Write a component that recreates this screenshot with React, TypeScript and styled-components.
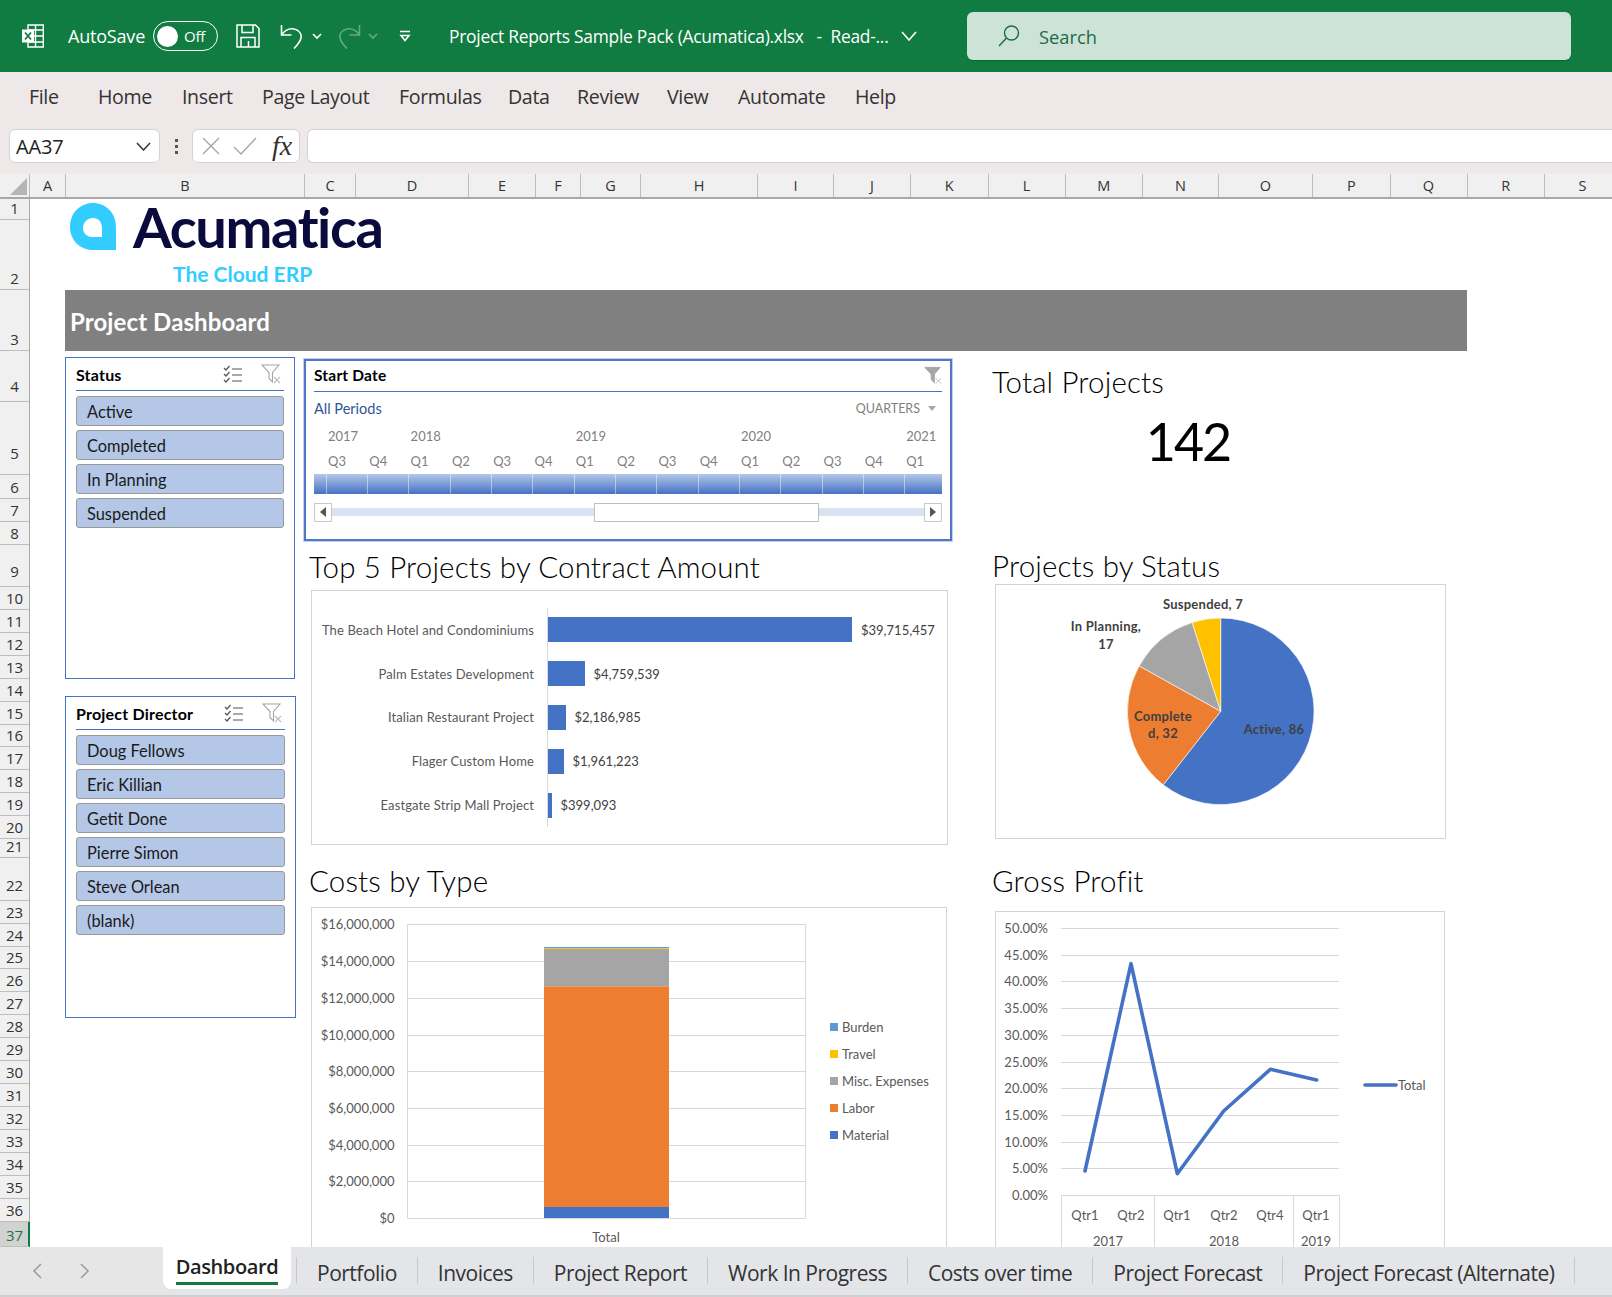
import React from "react";
import styled, { createGlobalStyle } from "styled-components";

const GlobalStyle = createGlobalStyle`
  html, body {
    margin: 0;
    padding: 0;
    background: #fff;
    font-family: "Open Sans", "Liberation Sans", sans-serif;
  }
  * { box-sizing: border-box; }
`;

const CALIBRI = `"Lato", "Liberation Sans", sans-serif`;

const Page = styled.div`
  width: 1612px;
  height: 1297px;
  overflow: hidden;
  display: flex;
  flex-direction: column;
  background: #fff;
`;

/* title bar */
const TitleBar = styled.div`
  height: 72px;
  flex: none;
  background: #107c41;
  color: #fff;
  display: flex;
  align-items: center;
  padding-left: 21px;
`;

const AutoSave = styled.span`
  margin-left: 23px;
  width: 85px;
  font-size: 18px;
  letter-spacing: -0.2px;
`;

const Toggle = styled.div`
  width: 65px;
  height: 30px;
  border: 1.5px solid #fff;
  border-radius: 15px;
  display: flex;
  align-items: center;
  padding-left: 3px;
  font-size: 15px;
  letter-spacing: -0.2px;
  gap: 6px;
`;

const Knob = styled.span`
  width: 21px;
  height: 21px;
  border-radius: 50%;
  background: #fff;
`;

const QuickIcon = styled.svg<{ $ml: number; $dim?: boolean }>`
  margin-left: ${(p) => p.$ml}px;
  flex: none;
  opacity: ${(p) => (p.$dim ? 0.35 : 1)};
`;

const DocTitle = styled.span`
  margin-left: 38px;
  width: 452px;
  font-size: 17.4px;
  letter-spacing: -0.25px;
  white-space: pre;
`;

const SearchBox = styled.div`
  width: 604px;
  height: 48px;
  margin-left: 50px;
  background: #cee3d8;
  border-radius: 6px;
  box-shadow: 0 1px 1px rgba(0, 0, 0, 0.2);
  display: flex;
  align-items: center;
  padding-left: 31px;
  gap: 19px;
  color: #1d6b43;
  font-size: 18.3px;
`;

/* ribbon */
const Ribbon = styled.div`
  flex: none;
  height: 102px;
  background: #efe8e8;
  display: flex;
  flex-direction: column;
`;

const MenuRow = styled.nav`
  height: 48px;
  margin-bottom: 9px;
  flex: none;
  display: flex;
  align-items: center;
  padding-left: 29px;
`;

const MenuItem = styled.span<{ $w: number }>`
  flex: none;
  width: ${(p) => p.$w}px;
  font-size: 19.6px;
  letter-spacing: -0.35px;
  color: #333;
`;

const FormulaRow = styled.div`
  height: 34px;
  flex: none;
  display: flex;
  align-items: stretch;
  padding-left: 9px;
`;

const FieldBox = styled.div`
  background: #fff;
  border: 1px solid #d4d2d2;
  border-radius: 6px;
  display: flex;
  align-items: center;
`;

const NameBox = styled(FieldBox)`
  width: 151px;
  padding: 1px 8px 0 6px;
  justify-content: space-between;
  font-size: 20px;
  letter-spacing: -0.2px;
  color: #222;
`;

const DotsHandle = styled.div`
  width: 32px;
  display: flex;
  flex-direction: column;
  align-items: center;
  justify-content: center;
  gap: 3px;
  span {
    width: 3px;
    height: 3px;
    background: #555;
  }
`;

const ButtonsBox = styled(FieldBox)`
  width: 108px;
  padding-left: 8px;
  gap: 12px;
`;

const FxMark = styled.span`
  margin-left: 3px;
  font-family: "Liberation Serif", serif;
  font-style: italic;
  font-size: 28px;
  line-height: 30px;
  color: #333;
`;

const FormulaInput = styled(FieldBox)`
  flex: 1;
  margin-left: 7px;
  border-right: none;
  border-radius: 6px 0 0 6px;
`;

/* column headers */
const ColumnHeaders = styled.div`
  height: 25px;
  flex: none;
  display: flex;
  background: #f0f0f0;
  border-bottom: 2px solid #a8a8a8;
`;

const Corner = styled.div`
  width: 30px;
  flex: none;
  border-right: 1px solid #bdbdbd;
  position: relative;
  &::after {
    content: "";
    position: absolute;
    right: 2px;
    bottom: 2px;
    border-style: solid;
    border-width: 0 0 17px 17px;
    border-color: transparent transparent #b5b5b5 transparent;
  }
`;

const ColHead = styled.div<{ $w: number }>`
  width: ${(p) => p.$w}px;
  flex: none;
  border-right: 1px solid #bdbdbd;
  text-align: center;
  font-size: 14.5px;
  line-height: 23px;
  color: #333;
`;

/* sheet */
const SheetArea = styled.div`
  height: 1048px;
  flex: none;
  display: flex;
`;

const RowHeaders = styled.div`
  width: 30px;
  flex: none;
  background: #f0f0f0;
  border-right: 1px solid #a8a8a8;
`;

const RowHead = styled.div<{ $h: number; $lift: number; $on?: boolean }>`
  height: ${(p) => p.$h}px;
  padding-bottom: ${(p) => p.$lift}px;
  border-bottom: 1px solid #bdbdbd;
  display: flex;
  align-items: flex-end;
  justify-content: center;
  font-size: 15px;
  line-height: 21px;
  color: ${(p) => (p.$on ? "#107c41" : "#333")};
  background: ${(p) => (p.$on ? "#d2d2d2" : "transparent")};
  ${(p) => (p.$on ? "box-shadow: 1px 0 0 #107c41, inset -1px 0 0 #107c41;" : "")}
`;

const Canvas = styled.div`
  flex: 1;
  min-width: 0;
  padding-left: 35px;
`;

const LogoBlock = styled.div`
  height: 91px;
  display: flex;
  flex-direction: column;
  padding: 2px 0 0 5px;
`;

const LogoRow = styled.div`
  display: flex;
  align-items: center;
  gap: 17px;
  height: 50px;
`;

const LogoWord = styled.span`
  display: block;
  margin: -8px 0 -10px;
  font-family: ${CALIBRI};
  font-weight: 700;
  font-size: 56px;
  line-height: 68px;
  letter-spacing: -1.4px;
  color: #0a0a3c;
`;

const LogoTag = styled.span`
  margin: 11px 0 0 103px;
  font-family: ${CALIBRI};
  font-weight: 700;
  font-size: 21px;
  line-height: 24px;
  color: #33ccff;
`;

const Banner = styled.div`
  width: 1402px;
  height: 61px;
  background: #808080;
  color: #fff;
  font-family: ${CALIBRI};
  font-weight: 700;
  font-size: 24px;
  letter-spacing: 0.1px;
  line-height: 32px;
  padding: 16px 0 0 5px;
`;

const Columns = styled.div`
  display: flex;
  align-items: flex-start;
`;

const LeftColumn = styled.div`
  width: 231px;
  flex: none;
  padding-top: 6px;
  display: flex;
  flex-direction: column;
  gap: 17px;
`;

const MidColumn = styled.div`
  width: 648px;
  flex: none;
  margin-left: 8px;
  padding-top: 8px;
`;

const RightColumn = styled.div`
  width: 460px;
  flex: none;
  margin-left: 40px;
`;

/* slicers */
const SlicerBox = styled.section<{ $w: number }>`
  width: ${(p) => p.$w}px;
  height: 322px;
  border: 1.5px solid #4472c4;
  padding: 0 10px;
`;

const SlicerHead = styled.div`
  height: 33px;
  border-bottom: 1.5px solid #4472c4;
  display: flex;
  align-items: center;
  justify-content: space-between;
  margin-bottom: 5px;
`;

const SlicerTitle = styled.h3`
  margin: 0;
  font-family: ${CALIBRI};
  font-weight: 700;
  font-size: 16px;
  letter-spacing: 0.2px;
  color: #000;
`;

const SlicerIcons = styled.div`
  display: flex;
  align-items: center;
  gap: 18px;
  padding-right: 3px;
`;

const SlicerItem = styled.div`
  height: 30px;
  margin-bottom: 4px;
  padding-left: 10px;
  background: #b4c7e7;
  border: 1px solid #999;
  border-radius: 3px;
  font-family: ${CALIBRI};
  font-size: 16.4px;
  line-height: 29px;
  color: #1a1a1a;
`;

/* timeline */
const TimelineBox = styled.section`
  height: 182px;
  border: 2px solid #4f78c6;
  outline: 1px solid #c3d2ec;
  padding: 0 8px;
`;

const TimelineHead = styled.div`
  height: 31px;
  padding-bottom: 2px;
  border-bottom: 1.5px solid #4472c4;
  display: flex;
  align-items: center;
  justify-content: space-between;
  font-family: ${CALIBRI};
  font-weight: 700;
  font-size: 15.5px;
  letter-spacing: 0.2px;
  color: #000;
`;

const PeriodRow = styled.div`
  height: 32px;
  display: flex;
  align-items: center;
  justify-content: space-between;
  font-family: ${CALIBRI};
`;

const AllPeriods = styled.span`
  font-size: 14.5px;
  color: #2f5597;
`;

const QuarterPick = styled.span`
  font-size: 12.5px;
  color: #7f7f7f;
  display: flex;
  align-items: center;
  gap: 8px;
  padding-right: 6px;
  &::after {
    content: "";
    border-style: solid;
    border-width: 5px 4px 0 4px;
    border-color: #a6a6a6 transparent transparent transparent;
  }
`;

const TickRow = styled.div<{ $h: number }>`
  display: flex;
  height: ${(p) => p.$h}px;
  align-items: center;
  padding-left: 14px;
  font-family: ${CALIBRI};
  font-size: 13px;
  color: #7f7f7f;
`;

const TickCell = styled.span`
  width: 41.3px;
  flex: none;
  white-space: nowrap;
`;

const PeriodBar = styled.div`
  height: 20px;
  display: flex;
  overflow: hidden;
  background: linear-gradient(#b4c7e7, #4472c4);
`;

const PeriodCell = styled.span<{ $w: number }>`
  width: ${(p) => p.$w}px;
  flex: none;
  border-right: 1px solid rgba(255, 255, 255, 0.45);
`;

const ScrollRow = styled.div`
  height: 20px;
  margin-top: 8px;
  display: flex;
  align-items: center;
`;

const ScrollButton = styled.div<{ $left?: boolean }>`
  width: 18px;
  height: 19px;
  flex: none;
  border: 1px solid #c8c8c8;
  background: #fff;
  display: flex;
  align-items: center;
  justify-content: center;
  &::after {
    content: "";
    border-style: solid;
    border-width: 5px 0 5px 6px;
    border-color: transparent transparent transparent #555;
    transform: ${(p) => (p.$left ? "rotate(180deg)" : "none")};
  }
`;

const ScrollTrack = styled.div`
  flex: 1;
  height: 8px;
  background: #d9e1f2;
  display: flex;
  align-items: center;
  padding-left: 262px;
`;

const ScrollThumb = styled.div`
  width: 225px;
  height: 19px;
  flex: none;
  background: #fff;
  border: 1.5px solid #bfbfbf;
`;

/* charts */
const SectionTitle = styled.h2<{ $h: number; $pad?: number; $below?: number }>`
  margin: 0 0 ${(p) => p.$below ?? 0}px;
  height: ${(p) => p.$h}px;
  padding-left: ${(p) => p.$pad ?? 5}px;
  font-family: ${CALIBRI};
  font-weight: 300;
  font-size: 29.5px;
  line-height: 36px;
  letter-spacing: 0.15px;
  color: #000;
  display: flex;
  align-items: flex-end;
  white-space: nowrap;
`;

// $open: the sheet tabs cover the lower part of the chart, so no bottom edge shows
const ChartBox = styled.div<{ $w: number; $h: number; $ml: number; $open?: boolean }>`
  width: ${(p) => p.$w}px;
  height: ${(p) => p.$h}px;
  margin-left: ${(p) => p.$ml}px;
  border: 1px solid #d4d4d4;
  ${(p) => (p.$open ? "border-bottom: none;" : "")}
  background: #fff;
`;

const BarList = styled.div`
  margin: 17px 0 0 0;
  height: 219px;
  display: flex;
  flex-direction: column;
  font-family: ${CALIBRI};
  font-size: 13px;
`;

const BarRow = styled.div`
  flex: 1;
  display: flex;
  align-items: stretch;
`;

const BarLabel = styled.div`
  width: 222px;
  flex: none;
  margin-right: 13px;
  text-align: right;
  align-self: center;
  letter-spacing: 0.12px;
  color: #595959;
`;

const BarTrack = styled.div`
  flex: 1;
  border-left: 1px solid #d9d9d9;
  display: flex;
  align-items: center;
`;

const Bar = styled.div`
  height: 25px;
  background: #4472c4;
  flex: none;
`;

const BarValue = styled.span`
  margin-left: 9px;
  color: #404040;
`;

const TotalValue = styled.div`
  width: 392px;
  margin-top: 11px;
  text-align: center;
  font-family: ${CALIBRI};
  font-size: 52px;
  line-height: 60px;
  letter-spacing: -2px;
  color: #000;
`;

const ChartText = styled.text<{ $bold?: boolean; $color?: string }>`
  font-family: ${CALIBRI};
  font-size: 13px;
  font-weight: ${(p) => (p.$bold ? 700 : 400)};
  letter-spacing: ${(p) => (p.$bold ? 0.25 : 0)}px;
  fill: ${(p) => p.$color ?? "#595959"};
`;

const ChartSvg = styled.svg`
  display: block;
`;

/* sheet tabs */
const TabBar = styled.div`
  height: 50px;
  flex: none;
  background: #e3e5e9;
  border-bottom: 2px solid #cfcfcf;
  display: flex;
  align-items: flex-start;
`;

const TabNav = styled.div`
  width: 163px;
  height: 100%;
  flex: none;
  background: #e6e6e7;
  display: flex;
  align-items: center;
  padding-left: 32px;
  gap: 38px;
`;

const ActiveTab = styled.div`
  width: 128px;
  height: 42px;
  flex: none;
  background: #fff;
  border-radius: 0 0 8px 8px;
  display: flex;
  justify-content: center;
`;

const ActiveLabel = styled.span`
  height: 38px;
  font-size: 20px;
  font-weight: 600;
  letter-spacing: -0.4px;
  line-height: 39px;
  color: #222;
  border-bottom: 3px solid #107c41;
`;

const Tab = styled.div`
  flex: none;
  height: 27px;
  margin-top: 10px;
  padding: 0 20px;
  border-right: 1px solid #c9c9c9;
  font-size: 21px;
  letter-spacing: -0.5px;
  line-height: 33px;
  color: #333;
`;

const TabGap = styled.div`
  width: 6px;
  height: 27px;
  margin-top: 10px;
  flex: none;
  border-right: 1px solid #c9c9c9;
`;

const COLUMNS: [string, number][] = [
  ["A", 36], ["B", 239], ["C", 51], ["D", 113], ["E", 67], ["F", 45], ["G", 60], ["H", 117], ["I", 76], ["J", 77],
  ["K", 77.5], ["L", 77], ["M", 77.5], ["N", 76], ["O", 94], ["P", 77.5], ["Q", 77], ["R", 77.5], ["S", 76],
];

const ROW_HEIGHTS = [
  21, 70, 61, 51, 73, 24, 23, 23, 42, 23, 23, 23, 23, 23, 23, 22, 23, 23, 23, 23, 19, 43, 23, 23, 22, 23, 23, 23, 23,
  23, 23, 23, 23, 23, 23, 23, 25,
];

// rows whose number sits higher above the bottom edge of the row
const ROW_LIFT: Record<number, number> = { 3: 4, 4: 10, 8: 4, 21: 4 };

const MENU: [string, number][] = [
  ["File", 69], ["Home", 84], ["Insert", 80], ["Page Layout", 137], ["Formulas", 109], ["Data", 69], ["Review", 90],
  ["View", 71], ["Automate", 117], ["Help", 60],
];

const STATUSES = ["Active", "Completed", "In Planning", "Suspended"];
const DIRECTORS = ["Doug Fellows", "Eric Killian", "Getit Done", "Pierre Simon", "Steve Orlean", "(blank)"];
const QUARTERS = ["Q3", "Q4", "Q1", "Q2", "Q3", "Q4", "Q1", "Q2", "Q3", "Q4", "Q1", "Q2", "Q3", "Q4", "Q1"];
const YEARS: Record<number, string> = { 0: "2017", 2: "2018", 6: "2019", 10: "2020", 14: "2021" };

const TOP_PROJECTS: [string, number, string][] = [
  ["The Beach Hotel and Condominiums", 304, "$39,715,457"],
  ["Palm Estates Development", 36.5, "$4,759,539"],
  ["Italian Restaurant Project", 17.5, "$2,186,985"],
  ["Flager Custom Home", 15.5, "$1,961,223"],
  ["Eastgate Strip Mall Project", 3.5, "$399,093"],
];

const TABS = ["Portfolio", "Invoices", "Project Report", "Work In Progress", "Costs over time", "Project Forecast", "Project Forecast (Alternate)"];

const slicePath = (cx: number, cy: number, r: number, from: number, to: number) => {
  const pt = (a: number) => {
    const rad = ((a - 90) * Math.PI) / 180;
    return `${(cx + r * Math.cos(rad)).toFixed(2)} ${(cy + r * Math.sin(rad)).toFixed(2)}`;
  };
  return `M${cx} ${cy}L${pt(from)}A${r} ${r} 0 ${to - from > 180 ? 1 : 0} 1 ${pt(to)}Z`;
};

const ExcelIcon = () => (
  <svg width="24" height="24" viewBox="0 0 24 24" fill="none" stroke="#fff" strokeWidth="1.4">
    <path d="M7 1h15.3v22H7z" />
    <path d="M7 6h15.3M7 12h15.3M7 18h15.3M14.5 1v22" />
    <rect x="1" y="5.5" width="12" height="13" fill="#fff" stroke="none" />
    <path d="M4 8.5l6 7M10 8.5l-6 7" stroke="#107c41" strokeWidth="1.8" />
  </svg>
);

const SaveIcon = () => (
  <QuickIcon $ml={18} width="24" height="24" viewBox="0 0 24 24" fill="none" stroke="#fff" strokeWidth="1.5">
    <path d="M1 1h18.5L23 4.5V23H1z" />
    <path d="M6 1v7.5h11V1M5 23v-9.5h14V23M12.5 17v6" />
  </QuickIcon>
);

const SmallChevron = ({ ml, dim }: { ml: number; dim?: boolean }) => (
  <QuickIcon $ml={ml} $dim={dim} width="10" height="8" viewBox="0 0 10 8" fill="none" stroke="#fff" strokeWidth="1.6">
    <path d="M1 2l4 4 4-4" />
  </QuickIcon>
);

const UndoIcon = ({ flip, ml, dim }: { flip?: boolean; ml: number; dim?: boolean }) => (
  <QuickIcon $ml={ml} $dim={dim} width="23" height="25" viewBox="0 0 23 25" fill="none" stroke="#fff" strokeWidth="1.6" transform={flip ? "scale(-1 1)" : undefined}>
    <path d="M1.5 1v10h10" />
    <path d="M1.5 11C5 6 9 4 14 5c5 1 8 5 7 9-.7 3-3.5 7-7 10.5" />
  </QuickIcon>
);

const CustomizeIcon = () => (
  <QuickIcon $ml={21} width="12" height="13" viewBox="0 0 12 13" fill="none" stroke="#fff" strokeWidth="1.6">
    <path d="M1 1.5h10M2 5.5l4 5 4-5z" />
  </QuickIcon>
);

const MultiSelectIcon = () => (
  <svg width="20" height="18" viewBox="0 0 20 18" fill="none" stroke="#555" strokeWidth="1.2">
    <path d="M1 3l2 2 3.5-4M1 9l2 2 3.5-4M1 15l2 2 3.5-4M9 4h10M9 10h10M9 16h10" />
  </svg>
);

const ClearFilterIcon = ({ solid }: { solid?: boolean }) => (
  <svg width={solid ? 18 : 20} height={solid ? 19 : 20} viewBox="0 0 20 20" fill={solid ? "#a6a6a6" : "none"} stroke="#a6a6a6" strokeWidth="1.1">
    <path d="M1 1h17l-6.5 7.5V18L8 14.5v-6z" />
    <path d="M13 13l6 6M19 13l-6 6" stroke="#bdbdbd" fill="none" />
  </svg>
);

const LogoMark = () => (
  <svg width="46" height="47" viewBox="0 0 46 47">
    <path
      fillRule="evenodd"
      fill="#33ccff"
      d="M23 0C35 0 46 9 46 24V47H23C10 47 0 37 0 24 0 9 11 0 23 0ZM23 15C17.5 15 13 19.5 13 25 13 30 17 34 22 34H32V25C32 19 28.5 15 23 15Z"
    />
  </svg>
);

const Slicer = ({ title, items, width }: { title: string; items: string[]; width: number }) => (
  <SlicerBox $w={width}>
    <SlicerHead>
      <SlicerTitle>{title}</SlicerTitle>
      <SlicerIcons>
        <MultiSelectIcon />
        <ClearFilterIcon />
      </SlicerIcons>
    </SlicerHead>
    {items.map((item) => (
      <SlicerItem key={item}>{item}</SlicerItem>
    ))}
  </SlicerBox>
);

const StartDate = () => (
  <TimelineBox>
    <TimelineHead>
      Start Date
      <ClearFilterIcon solid />
    </TimelineHead>
    <PeriodRow>
      <AllPeriods>All Periods</AllPeriods>
      <QuarterPick>QUARTERS</QuarterPick>
    </PeriodRow>
    <TickRow $h={24}>
      {QUARTERS.map((_, i) => (
        <TickCell key={i}>{YEARS[i] ?? ""}</TickCell>
      ))}
    </TickRow>
    <TickRow $h={26}>
      {QUARTERS.map((q, i) => (
        <TickCell key={i}>{q}</TickCell>
      ))}
    </TickRow>
    <PeriodBar>
      <PeriodCell $w={12.5} />
      {QUARTERS.map((_, i) => (
        <PeriodCell key={i} $w={41.35} />
      ))}
    </PeriodBar>
    <ScrollRow>
      <ScrollButton $left />
      <ScrollTrack>
        <ScrollThumb />
      </ScrollTrack>
      <ScrollButton />
    </ScrollRow>
  </TimelineBox>
);

const TopProjects = () => (
  <ChartBox $w={637} $h={255} $ml={7}>
    <BarList>
      {TOP_PROJECTS.map(([name, width, value]) => (
        <BarRow key={name}>
          <BarLabel>{name}</BarLabel>
          <BarTrack>
            <Bar style={{ width }} />
            <BarValue>{value}</BarValue>
          </BarTrack>
        </BarRow>
      ))}
    </BarList>
  </ChartBox>
);

const COST_TICKS = [
  ["$16,000,000", 923.5], ["$14,000,000", 960.5], ["$12,000,000", 997.5], ["$10,000,000", 1034.5], ["$8,000,000", 1070.5],
  ["$6,000,000", 1107.5], ["$4,000,000", 1144.5], ["$2,000,000", 1180.5], ["$0", 1217.5],
] as const;

const COST_SEGMENTS = [
  ["#5b9bd5", 946, 1.2], ["#ffc000", 947.2, 1], ["#a5a5a5", 948, 37.3], ["#ed7d31", 985.3, 220.7], ["#4472c4", 1206, 11],
] as const;

const COST_LEGEND = [
  ["Burden", "#5b9bd5", 1026], ["Travel", "#ffc000", 1053], ["Misc. Expenses", "#a5a5a5", 1080], ["Labor", "#ed7d31", 1107], ["Material", "#4472c4", 1134],
] as const;

const CostsChart = () => (
  <ChartBox $w={636} $h={340} $ml={7} $open>
    <ChartSvg width="634" height="339" viewBox="312 907 634 339">
      {COST_TICKS.map(([label, y]) => (
        <g key={label}>
          <line x1="407" x2="805" y1={y} y2={y} stroke="#d9d9d9" />
          <ChartText x="394.5" y={y + 4.5} textAnchor="end">{label}</ChartText>
        </g>
      ))}
      <path d="M407.5 923.5V1217.5M805.5 923.5V1217.5" stroke="#d9d9d9" fill="none" />
      {COST_SEGMENTS.map(([color, y, h]) => (
        <rect key={color} x="544" y={y} width="125" height={h} fill={color} />
      ))}
      <ChartText x="606" y="1241" textAnchor="middle">Total</ChartText>
      {COST_LEGEND.map(([label, color, y]) => (
        <g key={label}>
          <rect x="830" y={y - 4} width="8" height="8" fill={color} />
          <ChartText x="842" y={y + 4.5}>{label}</ChartText>
        </g>
      ))}
    </ChartSvg>
  </ChartBox>
);

const StatusPie = () => (
  <ChartBox $w={451} $h={255} $ml={3}>
    <ChartSvg width="449" height="253" viewBox="996 584 449 253">
      <g stroke="#fff" strokeWidth="0.6">
        <path d={slicePath(1220.7, 710.3, 93.3, 0, 218)} fill="#4472c4" />
        <path d={slicePath(1220.7, 710.3, 93.3, 218, 299.1)} fill="#ed7d31" />
        <path d={slicePath(1220.7, 710.3, 93.3, 299.1, 342.2)} fill="#a5a5a5" />
        <path d={slicePath(1220.7, 710.3, 93.3, 342.2, 360)} fill="#ffc000" />
      </g>
      <ChartText $bold $color="#404040" x="1203" y="608" textAnchor="middle">Suspended, 7</ChartText>
      <ChartText $bold $color="#404040" x="1106" y="630" textAnchor="middle">In Planning,</ChartText>
      <ChartText $bold $color="#404040" x="1106" y="648" textAnchor="middle">17</ChartText>
      <ChartText $bold $color="#404040" x="1163" y="720" textAnchor="middle">Complete</ChartText>
      <ChartText $bold $color="#404040" x="1163" y="737" textAnchor="middle">d, 32</ChartText>
      <ChartText $bold $color="#404040" x="1274" y="733" textAnchor="middle">Active, 86</ChartText>
    </ChartSvg>
  </ChartBox>
);

const PROFIT_TICKS = [
  ["50.00%", 927.5], ["45.00%", 954.5], ["40.00%", 980.5], ["35.00%", 1007.5], ["30.00%", 1034.5], ["25.00%", 1061.5],
  ["20.00%", 1087.5], ["15.00%", 1114.5], ["10.00%", 1141.5], ["5.00%", 1167.5], ["0.00%", 1194.5],
] as const;

const PROFIT_QUARTERS = [
  ["Qtr1", 1085], ["Qtr2", 1131], ["Qtr1", 1177], ["Qtr2", 1224], ["Qtr4", 1270], ["Qtr1", 1316],
] as const;

const PROFIT_YEARS = [["2017", 1108], ["2018", 1224], ["2019", 1316]] as const;

const ProfitChart = () => (
  <ChartBox $w={450} $h={336} $ml={3} $open>
    <ChartSvg width="448" height="335" viewBox="996 911 448 335">
      {PROFIT_TICKS.map(([label, y]) => (
        <g key={label}>
          <line x1="1061" x2="1339" y1={y} y2={y} stroke="#d9d9d9" />
          <ChartText x="1048" y={y + 4.5} textAnchor="end">{label}</ChartText>
        </g>
      ))}
      <path d="M1061.5 1194V1260M1154.5 1194V1260M1293.5 1194V1260M1339.5 1194V1260" stroke="#d9d9d9" fill="none" />
      <polyline
        points="1085,1170 1131,962.7 1177.3,1172.7 1223.7,1110 1270.3,1068.3 1316.7,1079"
        fill="none"
        stroke="#4472c4"
        strokeWidth="3.6"
        strokeLinecap="round"
        strokeLinejoin="round"
      />
      {PROFIT_QUARTERS.map(([label, x], i) => (
        <ChartText key={i} x={x} y="1218.5" textAnchor="middle">{label}</ChartText>
      ))}
      {PROFIT_YEARS.map(([label, x]) => (
        <ChartText key={label} x={x} y="1245" textAnchor="middle">{label}</ChartText>
      ))}
      <line x1="1365" x2="1396" y1="1084" y2="1084" stroke="#4472c4" strokeWidth="3.6" strokeLinecap="round" />
      <ChartText x="1398" y="1089">Total</ChartText>
    </ChartSvg>
  </ChartBox>
);

const App = () => (
  <Page>
    <GlobalStyle />
    <TitleBar>
      <ExcelIcon />
      <AutoSave>AutoSave</AutoSave>
      <Toggle>
        <Knob />
        Off
      </Toggle>
      <SaveIcon />
      <UndoIcon ml={20} />
      <SmallChevron ml={9} />
      <UndoIcon flip dim ml={16} />
      <SmallChevron dim ml={7} />
      <CustomizeIcon />
      <DocTitle>Project Reports Sample Pack (Acumatica).xlsx   -  Read-...</DocTitle>
      <svg width="16" height="10" viewBox="0 0 16 10" fill="none" stroke="#fff" strokeWidth="1.6">
        <path d="M1 1l7 8 7-8" />
      </svg>
      <SearchBox>
        <svg width="22" height="22" viewBox="0 0 22 22" fill="none" stroke="#1d6b43" strokeWidth="1.4">
          <circle cx="13.5" cy="8" r="7" />
          <path d="M8.5 13L1 21" />
        </svg>
        Search
      </SearchBox>
    </TitleBar>

    <Ribbon>
      <MenuRow>
        {MENU.map(([label, w]) => (
          <MenuItem key={label} $w={w}>{label}</MenuItem>
        ))}
      </MenuRow>
      <FormulaRow>
        <NameBox>
          AA37
          <svg width="15" height="9" viewBox="0 0 15 9" fill="none" stroke="#333" strokeWidth="1.5">
            <path d="M1 1l6.5 7L14 1" />
          </svg>
        </NameBox>
        <DotsHandle>
          <span />
          <span />
          <span />
        </DotsHandle>
        <ButtonsBox>
          <svg width="20" height="20" viewBox="0 0 20 20" fill="none" stroke="#a6a6a6" strokeWidth="1.4">
            <path d="M2 2l16 16M18 2L2 18" />
          </svg>
          <svg width="24" height="20" viewBox="0 0 24 20" fill="none" stroke="#a6a6a6" strokeWidth="1.4">
            <path d="M1 11l7 7L23 2" />
          </svg>
          <FxMark>fx</FxMark>
        </ButtonsBox>
        <FormulaInput />
      </FormulaRow>
    </Ribbon>

    <ColumnHeaders>
      <Corner />
      {COLUMNS.map(([label, w]) => (
        <ColHead key={label} $w={w}>{label}</ColHead>
      ))}
    </ColumnHeaders>

    <SheetArea>
      <RowHeaders>
        {ROW_HEIGHTS.map((h, i) => (
          <RowHead key={i} $h={h} $lift={ROW_LIFT[i] ?? 0} $on={i === 36}>{i + 1}</RowHead>
        ))}
      </RowHeaders>
      <Canvas>
        <LogoBlock>
          <LogoRow>
            <LogoMark />
            <LogoWord>Acumatica</LogoWord>
          </LogoRow>
          <LogoTag>The Cloud ERP</LogoTag>
        </LogoBlock>
        <Banner>Project Dashboard</Banner>
        <Columns>
          <LeftColumn>
            <Slicer title="Status" items={STATUSES} width={230} />
            <Slicer title="Project Director" items={DIRECTORS} width={231} />
          </LeftColumn>
          <MidColumn>
            <StartDate />
            <SectionTitle $h={44} $below={5}>Top 5 Projects by Contract Amount</SectionTitle>
            <TopProjects />
            <SectionTitle $h={54} $below={8}>Costs by Type</SectionTitle>
            <CostsChart />
          </MidColumn>
          <RightColumn>
            <SectionTitle $h={49} $pad={0}>Total Projects</SectionTitle>
            <TotalValue>142</TotalValue>
            <SectionTitle $h={113} $pad={0}>Projects by Status</SectionTitle>
            <StatusPie />
            <SectionTitle $h={60} $pad={0} $below={12}>Gross Profit</SectionTitle>
            <ProfitChart />
          </RightColumn>
        </Columns>
      </Canvas>
    </SheetArea>

    <TabBar>
      <TabNav>
        <svg width="10" height="16" viewBox="0 0 10 16" fill="none" stroke="#9a9a9a" strokeWidth="1.5">
          <path d="M9 1L2 8l7 7" />
        </svg>
        <svg width="10" height="16" viewBox="0 0 10 16" fill="none" stroke="#9a9a9a" strokeWidth="1.5">
          <path d="M1 1l7 7-7 7" />
        </svg>
      </TabNav>
      <ActiveTab>
        <ActiveLabel>Dashboard</ActiveLabel>
      </ActiveTab>
      <TabGap />
      {TABS.map((tab) => (
        <Tab key={tab}>{tab}</Tab>
      ))}
    </TabBar>
  </Page>
);

export default App;
